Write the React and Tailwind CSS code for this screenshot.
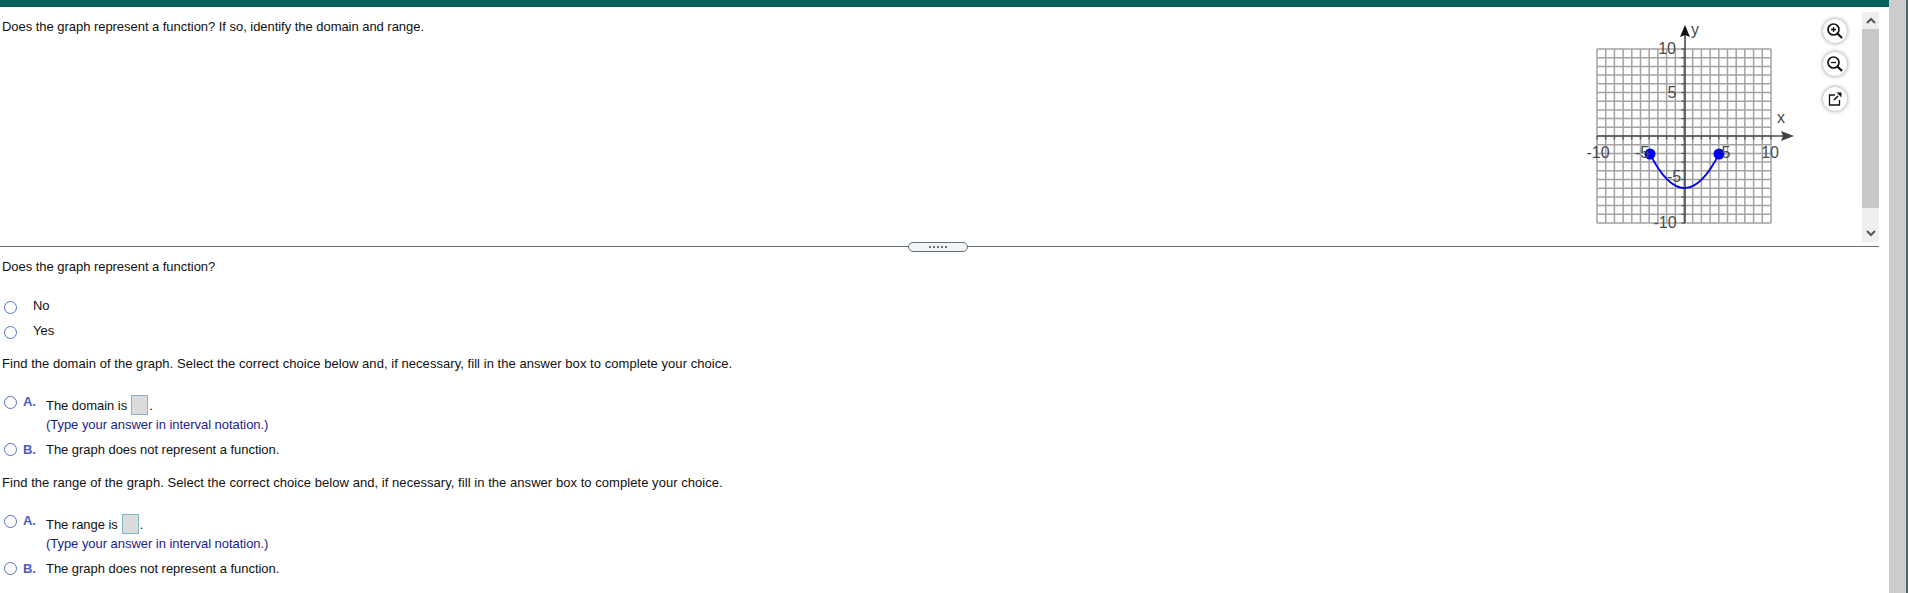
const gridLines = Array.from({ length: 21 }, (_, i) => 17 + i * 8.7);

function Radio() {
  return <span className="block w-[13px] h-[13px] rounded-full border-[1.5px] border-[#5272c8] bg-white shrink-0" />;
}

function Graph() {
  // svg origin sits at page (1580, 20)
  const cx = 105;
  const cy = 116;
  return (
    <svg width="240" height="210" className="shrink-0" style={{ fontFamily: "Liberation Sans, Arial, sans-serif" }}>
      {gridLines.map((p) => (
        <g key={p}>
          <line x1={p} y1="29" x2={p} y2="203" stroke="#a3a3a3" strokeWidth="1.5" />
          <line x1="17" y1={p + 12} x2="191" y2={p + 12} stroke="#a3a3a3" strokeWidth="1.5" />
        </g>
      ))}
      <line x1="17" y1={cy} x2="204" y2={cy} stroke="#4a4a4a" strokeWidth="1.6" />
      <line x1={cx} y1="14" x2={cx} y2="203" stroke="#4a4a4a" strokeWidth="1.6" />
      {gridLines.map((p) => (
        <g key={p}>
          <line x1={p} y1={cy} x2={p} y2={cy + 3.5} stroke="#555" strokeWidth="1.3" />
          <line x1={cx - 3.5} y1={p + 12} x2={cx} y2={p + 12} stroke="#555" strokeWidth="1.3" />
        </g>
      ))}
      <path d="M105 5 L110 17 L105 15 L100 17 Z" fill="#111" />
      <path d="M214 116 L201 111 L203 116 L201 121 Z" fill="#444" />
      <path d="M70 134 Q104.5 202 139 134" fill="none" stroke="#0000e6" strokeWidth="1.7" />
      <circle cx="70" cy="134" r="5.5" fill="#0000f0" />
      <circle cx="139" cy="134" r="5.5" fill="#0000f0" />
      <g fill="#4a4a4a" fontSize="16">
        <text x="18" y="137.5" textAnchor="middle">-10</text>
        <text x="62" y="137.5" textAnchor="middle">-5</text>
        <text x="146" y="137.5" textAnchor="middle">5</text>
        <text x="190" y="137.5" textAnchor="middle">10</text>
        <text x="87" y="34" textAnchor="middle">10</text>
        <text x="92" y="78" textAnchor="middle">5</text>
        <text x="94" y="162" textAnchor="middle">-5</text>
        <text x="85" y="208" textAnchor="middle">-10</text>
        <text x="201" y="103" textAnchor="middle">x</text>
        <text x="115" y="15" textAnchor="middle">y</text>
      </g>
    </svg>
  );
}

function ToolButton({ children }) {
  return (
    <button className="w-[24px] h-[24px] rounded-full bg-white shadow-[0_0_4px_rgba(0,0,0,0.45)] flex items-center justify-center">
      {children}
    </button>
  );
}

function BlankChoice({ letter, before, hint }) {
  return (
    <div className="flex">
      <div className="pt-px"><Radio /></div>
      <span className="ml-[6px] w-[23px] font-bold text-[#4a5cc4] -mt-px">{letter}</span>
      <div>
        <div className="flex items-center h-[20px]">
          <span className="mr-[4px]">{before}</span>
          <span className="block w-[17px] h-[20px] border border-[#7fb6c8] bg-[#dcdcdc]" />
          <span className="ml-[1px]">.</span>
        </div>
        <div className="text-[#1c1c8c] mt-[2px]">{hint}</div>
      </div>
    </div>
  );
}

function PlainChoice({ letter, text }) {
  return (
    <div className="flex items-center h-[15px]">
      <Radio />
      <span className="ml-[6px] w-[23px] font-bold text-[#4a5cc4]">{letter}</span>
      <span>{text}</span>
    </div>
  );
}

export default function App() {
  return (
    <div className="flex w-[1908px] h-[593px] overflow-hidden bg-white text-[13px] leading-[15px] tracking-[-0.04px] text-[#111]" style={{ fontFamily: "Liberation Sans, Arial, sans-serif" }}>
      <div className="w-[1889px] flex flex-col relative">
        <div className="h-[7px] bg-[#04615a] shrink-0" />

        {/* top pane with the graph */}
        <div className="h-[239px] flex pr-[10px] shrink-0">
          <div className="flex-1 pl-[2px] pt-[12px]">Does the graph represent a function? If so, identify the domain and range.</div>
          <div className="mt-[13px]"><Graph /></div>
          <div className="w-[39px] ml-[3px] pt-[12px] flex flex-col items-start">
            <ToolButton>
              <svg width="18" height="18" viewBox="0 0 18 18" fill="none" stroke="#111" strokeWidth="1.7">
                <circle cx="7.5" cy="7.5" r="5.5" />
                <path d="M5 7.5h5M7.5 5v5" strokeWidth="1.3" />
                <path d="M11.5 11.5l4.5 4.5" strokeWidth="2.2" />
              </svg>
            </ToolButton>
            <div className="mt-[9px]">
              <ToolButton>
                <svg width="18" height="18" viewBox="0 0 18 18" fill="none" stroke="#111" strokeWidth="1.7">
                  <circle cx="7.5" cy="7.5" r="5.5" />
                  <path d="M5 7.5h5" strokeWidth="1.3" />
                  <path d="M11.5 11.5l4.5 4.5" strokeWidth="2.2" />
                </svg>
              </ToolButton>
            </div>
            <div className="mt-[11px]">
              <ToolButton>
                <svg width="16" height="16" viewBox="0 0 16 16" fill="none" stroke="#111" strokeWidth="1.3">
                  <path d="M8 4H2.5v10h10V9" />
                  <path d="M7 9l4-4" strokeWidth="1.6" />
                  <path d="M9.5 1.5h5v5z" fill="#111" stroke="none" />
                </svg>
              </ToolButton>
            </div>
          </div>
          <div className="w-[17px] mt-[5px] flex flex-col bg-[#efefef] h-[230px] shrink-0">
            <div className="h-[17px] flex items-center justify-center">
              <svg width="10" height="7" viewBox="0 0 10 7" fill="none" stroke="#555" strokeWidth="2"><path d="M1 6l4-4 4 4" /></svg>
            </div>
            <div className="h-[179px] bg-[#c8c8c8]" />
            <div className="flex-1 flex items-end justify-center pb-[5px]">
              <svg width="10" height="7" viewBox="0 0 10 7" fill="none" stroke="#555" strokeWidth="2"><path d="M1 1l4 4 4-4" /></svg>
            </div>
          </div>
        </div>

        {/* divider and drag handle */}
        <div className="h-px w-[1879px] bg-[#65727c] shrink-0" />
        <div className="absolute left-[908px] top-[242px] w-[60px] h-[10px] rounded-full border border-[#65727c] bg-[#f3f4f6] flex items-center justify-center gap-[2px]">
          {[0, 1, 2, 3, 4].map((i) => (
            <span key={i} className="block w-[2px] h-[2px] bg-[#65727c]" />
          ))}
        </div>

        {/* answer pane */}
        <div className="pl-[2px] pt-[12px]">
          <div>Does the graph represent a function?</div>
          <div className="mt-[24px] ml-[2px] flex flex-col gap-[10px]">
            <div className="flex items-center h-[15px]"><span className="pt-[3px]"><Radio /></span><span className="ml-[16px]">No</span></div>
            <div className="flex items-center h-[15px]"><span className="pt-[3px]"><Radio /></span><span className="ml-[16px]">Yes</span></div>
          </div>
          <div className="mt-[18px] tracking-[0.05px]">Find the domain of the graph. Select the correct choice below and, if necessary, fill in the answer box to complete your choice.</div>
          <div className="mt-[24px] ml-[2px] flex flex-col gap-[10px]">
            <BlankChoice letter="A." before="The domain is" hint="(Type your answer in interval notation.)" />
            <PlainChoice letter="B." text="The graph does not represent a function." />
          </div>
          <div className="mt-[18px] tracking-[0.05px]">Find the range of the graph. Select the correct choice below and, if necessary, fill in the answer box to complete your choice.</div>
          <div className="mt-[24px] ml-[2px] flex flex-col gap-[10px]">
            <BlankChoice letter="A." before="The range is" hint="(Type your answer in interval notation.)" />
            <PlainChoice letter="B." text="The graph does not represent a function." />
          </div>
        </div>
      </div>
      <div className="flex-1 bg-[#cccccc] border-r-2 border-[#4a6a70]" />
    </div>
  );
}
